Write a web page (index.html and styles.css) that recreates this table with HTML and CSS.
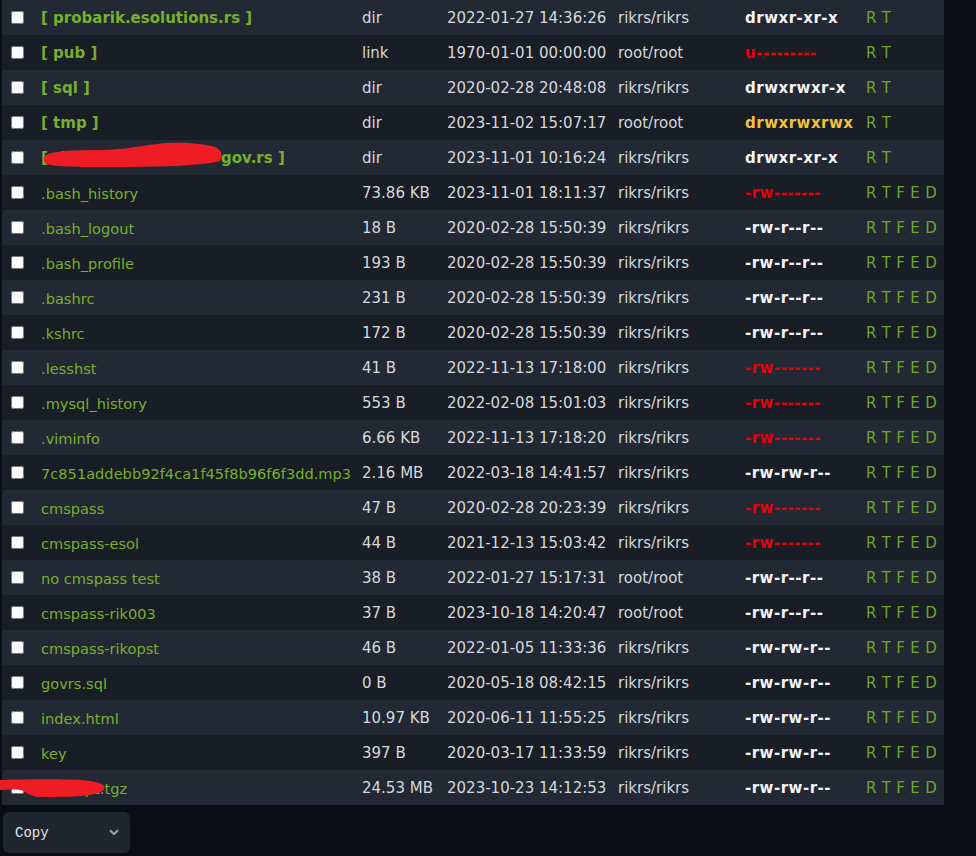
FILE: index.html
```html
<!DOCTYPE html>
<html>
<head>
<meta charset="utf-8">
<link rel="stylesheet" href="styles.css">
</head>
<body>
<div class="wrap">
<table class="files">
<colgroup>
<col class="c-chk"><col class="c-name"><col class="c-type"><col class="c-date"><col class="c-own"><col class="c-perm"><col class="c-act">
</colgroup>
<tbody>
<tr><td class="chk"><input type="checkbox"></td><td class="name dir">[ probarik.esolutions.rs ]</td><td>dir</td><td>2022-01-27 14:36:26</td><td>rikrs/rikrs</td><td class="perm">drwxr-xr-x</td><td class="act">R T</td></tr>
<tr><td class="chk"><input type="checkbox"></td><td class="name dir">[ pub ]</td><td>link</td><td>1970-01-01 00:00:00</td><td>root/root</td><td class="perm red">u---------</td><td class="act">R T</td></tr>
<tr><td class="chk"><input type="checkbox"></td><td class="name dir">[ sql ]</td><td>dir</td><td>2020-02-28 20:48:08</td><td>rikrs/rikrs</td><td class="perm">drwxrwxr-x</td><td class="act">R T</td></tr>
<tr><td class="chk"><input type="checkbox"></td><td class="name dir">[ tmp ]</td><td>dir</td><td>2023-11-02 15:07:17</td><td>root/root</td><td class="perm yellow">drwxrwxrwx</td><td class="act">R T</td></tr>
<tr><td class="chk"><input type="checkbox"></td><td class="name dir redacted">[ <span class="hid">rikpravobranistvo.</span>gov.rs ]<svg class="blob blob1" width="180" height="26" viewBox="0 0 180 26"><path d="M2 14 C6 9 30 8 60 8 C90 7 105 2 125 1 C145 0 160 2 172 5 C179 8 180 14 177 19 C160 24 110 25 70 25 C35 25 12 25 4 22 C0 20 0 17 2 14 Z" fill="#ee1c24"/></svg></td><td>dir</td><td>2023-11-01 10:16:24</td><td>rikrs/rikrs</td><td class="perm">drwxr-xr-x</td><td class="act">R T</td></tr>
<tr><td class="chk"><input type="checkbox"></td><td class="name">.bash_history</td><td>73.86 KB</td><td>2023-11-01 18:11:37</td><td>rikrs/rikrs</td><td class="perm red">-rw-------</td><td class="act">R T F E D</td></tr>
<tr><td class="chk"><input type="checkbox"></td><td class="name">.bash_logout</td><td>18 B</td><td>2020-02-28 15:50:39</td><td>rikrs/rikrs</td><td class="perm">-rw-r--r--</td><td class="act">R T F E D</td></tr>
<tr><td class="chk"><input type="checkbox"></td><td class="name">.bash_profile</td><td>193 B</td><td>2020-02-28 15:50:39</td><td>rikrs/rikrs</td><td class="perm">-rw-r--r--</td><td class="act">R T F E D</td></tr>
<tr><td class="chk"><input type="checkbox"></td><td class="name">.bashrc</td><td>231 B</td><td>2020-02-28 15:50:39</td><td>rikrs/rikrs</td><td class="perm">-rw-r--r--</td><td class="act">R T F E D</td></tr>
<tr><td class="chk"><input type="checkbox"></td><td class="name">.kshrc</td><td>172 B</td><td>2020-02-28 15:50:39</td><td>rikrs/rikrs</td><td class="perm">-rw-r--r--</td><td class="act">R T F E D</td></tr>
<tr><td class="chk"><input type="checkbox"></td><td class="name">.lesshst</td><td>41 B</td><td>2022-11-13 17:18:00</td><td>rikrs/rikrs</td><td class="perm red">-rw-------</td><td class="act">R T F E D</td></tr>
<tr><td class="chk"><input type="checkbox"></td><td class="name">.mysql_history</td><td>553 B</td><td>2022-02-08 15:01:03</td><td>rikrs/rikrs</td><td class="perm red">-rw-------</td><td class="act">R T F E D</td></tr>
<tr><td class="chk"><input type="checkbox"></td><td class="name">.viminfo</td><td>6.66 KB</td><td>2022-11-13 17:18:20</td><td>rikrs/rikrs</td><td class="perm red">-rw-------</td><td class="act">R T F E D</td></tr>
<tr><td class="chk"><input type="checkbox"></td><td class="name">7c851addebb92f4ca1f45f8b96f6f3dd.mp3</td><td>2.16 MB</td><td>2022-03-18 14:41:57</td><td>rikrs/rikrs</td><td class="perm">-rw-rw-r--</td><td class="act">R T F E D</td></tr>
<tr><td class="chk"><input type="checkbox"></td><td class="name">cmspass</td><td>47 B</td><td>2020-02-28 20:23:39</td><td>rikrs/rikrs</td><td class="perm red">-rw-------</td><td class="act">R T F E D</td></tr>
<tr><td class="chk"><input type="checkbox"></td><td class="name">cmspass-esol</td><td>44 B</td><td>2021-12-13 15:03:42</td><td>rikrs/rikrs</td><td class="perm red">-rw-------</td><td class="act">R T F E D</td></tr>
<tr><td class="chk"><input type="checkbox"></td><td class="name">no cmspass test</td><td>38 B</td><td>2022-01-27 15:17:31</td><td>root/root</td><td class="perm">-rw-r--r--</td><td class="act">R T F E D</td></tr>
<tr><td class="chk"><input type="checkbox"></td><td class="name">cmspass-rik003</td><td>37 B</td><td>2023-10-18 14:20:47</td><td>root/root</td><td class="perm">-rw-r--r--</td><td class="act">R T F E D</td></tr>
<tr><td class="chk"><input type="checkbox"></td><td class="name">cmspass-rikopst</td><td>46 B</td><td>2022-01-05 11:33:36</td><td>rikrs/rikrs</td><td class="perm">-rw-rw-r--</td><td class="act">R T F E D</td></tr>
<tr><td class="chk"><input type="checkbox"></td><td class="name">govrs.sql</td><td>0 B</td><td>2020-05-18 08:42:15</td><td>rikrs/rikrs</td><td class="perm">-rw-rw-r--</td><td class="act">R T F E D</td></tr>
<tr><td class="chk"><input type="checkbox"></td><td class="name">index.html</td><td>10.97 KB</td><td>2020-06-11 11:55:25</td><td>rikrs/rikrs</td><td class="perm">-rw-rw-r--</td><td class="act">R T F E D</td></tr>
<tr><td class="chk"><input type="checkbox"></td><td class="name">key</td><td>397 B</td><td>2020-03-17 11:33:59</td><td>rikrs/rikrs</td><td class="perm">-rw-rw-r--</td><td class="act">R T F E D</td></tr>
<tr><td class="chk"><input type="checkbox"></td><td class="name">riksbkpt.tgz</td><td>24.53 MB</td><td>2023-10-23 14:12:53</td><td>rikrs/rikrs</td><td class="perm">-rw-rw-r--</td><td class="act">R T F E D</td></tr>
</tbody>
</table>
<svg class="blob blob2" width="106" height="20" viewBox="0 0 106 20"><path d="M0 1 C25 0 60 0 82 1 C94 2 102 4 104 7 C106 10 102 13 95 15 C80 18 60 18 40 18 C30 18 26 12 20 11 C12 10 5 11 0 11 Z" fill="#ee1c24"/></svg>
</div>
<div class="actions">
  <div class="select">
    <span class="select-label">Copy</span>
    <svg class="chev" width="10" height="7" viewBox="0 0 10 7"><path d="M1 1.2 L5 5 L9 1.2" fill="none" stroke="#9aa0a6" stroke-width="2"/></svg>
  </div>
</div>
</body>
</html>
```

FILE: styles.css
```css
html, body {
  margin: 0;
  padding: 0;
  background: #0a0d14;
}
body {
  font-family: "DejaVu Sans", Verdana, sans-serif;
  font-size: 15px;
  color: #d6d8db;
}
.wrap {
  position: relative;
  width: 944px;
}
.files {
  margin-left: 2px;
  width: 942px;
  border-collapse: collapse;
  table-layout: fixed;
}
.c-chk { width: 31px; }
.c-name { width: 321px; }
.c-type { width: 85px; }
.c-date { width: 171px; }
.c-own { width: 127px; }
.c-perm { width: 121px; }
.c-act { width: 86px; }
.files tr { height: 35px; }
.files tr:nth-child(odd) { background: #222934; }
.files tr:nth-child(even) { background: #191d25; }
.files td {
  padding: 2px 0 0 8px;
  vertical-align: middle;
  white-space: nowrap;
  overflow: visible;
  line-height: 33px;
}
.files td.chk {
  padding: 0 0 0 9px;
  line-height: 0;
}
.chk input {
  margin: 0;
  width: 13px;
  height: 13px;
  vertical-align: middle;
}
.name {
  color: #76b02c;
  font-size: 14.6px;
}
.name.dir {
  font-weight: bold;
  font-size: 15px;
}
.redacted {
  position: relative;
}
.hid {
  display: inline-block;
  width: 168px;
  overflow: hidden;
  vertical-align: top;
}
.perm {
  font-weight: bold;
  color: #f4f4f4;
  letter-spacing: 0.5px;
}
.perm.red { color: #e8000b; }
.perm.yellow { color: #f2c23a; }
.act {
  color: #6ca62c;
  letter-spacing: 0.3px;
}
.blob {
  position: absolute;
}
.blob1 {
  left: 10px;
  top: 2px;
}
.blob2 {
  left: 0;
  top: 779px;
}
.actions {
  padding: 7px 0 0 3px;
}
.select {
  width: 127px;
  height: 41px;
  box-sizing: border-box;
  background: #20262f;
  border-radius: 6px;
  display: flex;
  align-items: center;
  justify-content: space-between;
  padding: 0 11px 0 12px;
}
.select-label {
  font-family: "Courier New", "Nimbus Mono PS", "FreeMono", "Liberation Mono", monospace;
  font-size: 14px;
  color: #e2e4e6;
}
.chev {
  display: block;
}
```
